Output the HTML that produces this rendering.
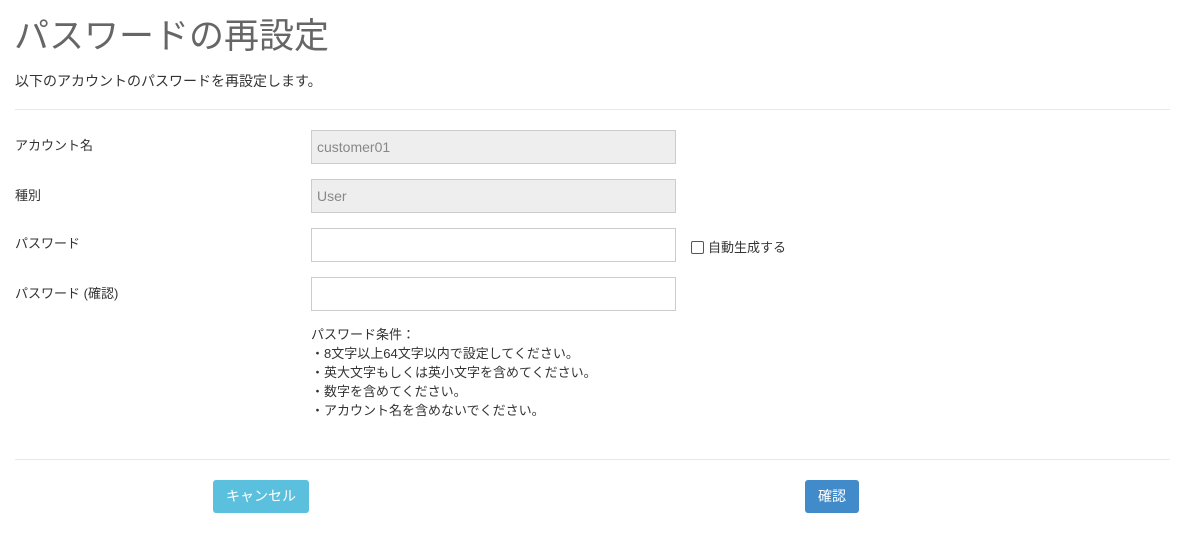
<!DOCTYPE html>
<html><head><meta charset="utf-8"><style>
body{margin:0;width:1200px;height:545px;background:#fff;font-family:"Liberation Sans","Noto Sans CJK JP",sans-serif;color:#333;position:relative;overflow:hidden}
.a{position:absolute;white-space:nowrap}
h1{position:absolute;left:14px;top:13px;margin:0;font-size:35px;font-weight:normal;color:#666;line-height:48px;white-space:nowrap}
.hr{position:absolute;left:15px;width:1155px;height:1px;background:#e8e8e8}
.lbl{position:absolute;left:15px;font-size:13px}
.in{position:absolute;left:311px;height:32px;border:1px solid #ccc;box-sizing:content-box;font-size:14px;color:#888;line-height:32px;padding-left:5px;width:358px}
.ro{background:#eee}
.btn{position:absolute;top:480px;height:33px;border-radius:3px;color:#fff;font-size:14px;line-height:33px;text-align:center}
</style></head><body>
<h1>パスワードの再設定</h1>
<div class="a" style="left:15px;top:71px;font-size:14px">以下のアカウントのパスワードを再設定します。</div>
<div class="hr" style="top:109px"></div>
<div class="lbl" style="top:135px">アカウント名</div>
<div class="in ro" style="top:130px">customer01</div>
<div class="lbl" style="top:185px">種別</div>
<div class="in ro" style="top:179px">User</div>
<div class="lbl" style="top:233px">パスワード</div>
<div class="in" style="top:228px"></div>
<div class="a" style="left:691px;top:237px;font-size:13px"><span style="display:inline-block;width:11px;height:11px;border:1px solid #555;border-radius:2px;vertical-align:-2px;margin-right:4px"></span>自動生成する</div>
<div class="lbl" style="top:283px">パスワード (確認)</div>
<div class="in" style="top:277px"></div>
<div class="a" style="left:311px;top:325px;font-size:13px;line-height:19px">パスワード条件：<br>・8文字以上64文字以内で設定してください。<br>・英大文字もしくは英小文字を含めてください。<br>・数字を含めてください。<br>・アカウント名を含めないでください。</div>
<div class="hr" style="top:459px"></div>
<div class="btn" style="left:213px;width:96px;background:#5bc0de">キャンセル</div>
<div class="btn" style="left:805px;width:54px;background:#428bca">確認</div>
</body></html>
